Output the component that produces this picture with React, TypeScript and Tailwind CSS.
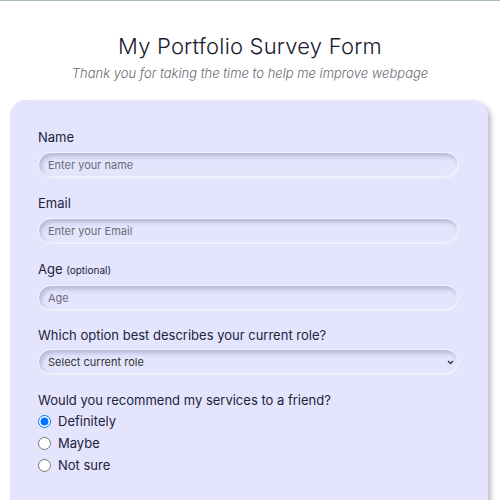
import React from "react";

const inputCls =
  "w-full h-[26px] rounded-full bg-[#e4e5fd] px-[9px] text-[11px] text-[#333] placeholder:text-[#6b6b78] outline-none border border-[#f3f3ff] shadow-[inset_2px_3px_5px_rgba(120,120,160,0.45),inset_-1px_-1px_2px_rgba(255,255,255,0.7)]";

export default function App() {
  return (
    <div
      className="w-[500px] h-[500px] overflow-hidden bg-white border-t border-[#a9bcc4]"
      style={{ fontFamily: "Inter, 'Open Sans', sans-serif" }}
    >
      <div className="flex flex-col items-center pt-[31px]">
        <h1 className="text-[22px] leading-[28px] font-light text-[#1a1a2e] tracking-[0.2px]">
          My Portfolio Survey Form
        </h1>
        <p className="mt-[5px] text-[13px] leading-[17px] italic font-light text-[#6a6a72]">
          Thank you for taking the time to help me improve webpage
        </p>
      </div>
      <div className="mt-[18px] ml-[10px] w-[478px] h-[420px] rounded-[16px] bg-[#e4e5fd] shadow-[3px_3px_5px_rgba(120,120,150,0.5)] pl-[28px] pr-[29px] pt-[29px]">
        <label className="block text-[13px] leading-[17px] text-[#22223a]">Name</label>
        <input className={"block mt-[6px] " + inputCls} placeholder="Enter your name" />

        <label className="block mt-[17px] text-[13px] leading-[17px] text-[#22223a]">Email</label>
        <input className={"block mt-[6px] " + inputCls} placeholder="Enter your Email" />

        <label className="block mt-[17px] text-[13px] leading-[17px] text-[#22223a]">
          Age <span className="text-[10px]">(optional)</span>
        </label>
        <input className={"block mt-[6px] " + inputCls} placeholder="Age" />

        <label className="block mt-[16px] text-[13px] leading-[17px] text-[#22223a]">
          Which option best describes your current role?
        </label>
        <div className={"mt-[5px] relative flex items-center " + inputCls}>
          <span className="text-[11px] leading-[14px] text-[#333]">Select current role</span>
          <svg
            className="absolute right-[4px] top-[10px]"
            width="7"
            height="5"
            viewBox="0 0 7 5"
            fill="none"
          >
            <path d="M1 1l2.5 2.5L6 1" stroke="#333" strokeWidth="1.3" />
          </svg>
        </div>

        <div className="mt-[17px] text-[13px] leading-[17px] text-[#22223a]">
          Would you recommend my services to a friend?
        </div>
        <div className="mt-[4px] flex flex-col gap-[5px]">
          {["Definitely", "Maybe", "Not sure"].map((o, i) => (
            <label key={o} className="flex items-center gap-[7px] text-[13px] leading-[17px] text-[#22223a]">
              <input type="radio" name="rec" defaultChecked={i === 0} className="m-0 w-[13px] h-[13px]" />
              {o}
            </label>
          ))}
        </div>
      </div>
    </div>
  );
}
